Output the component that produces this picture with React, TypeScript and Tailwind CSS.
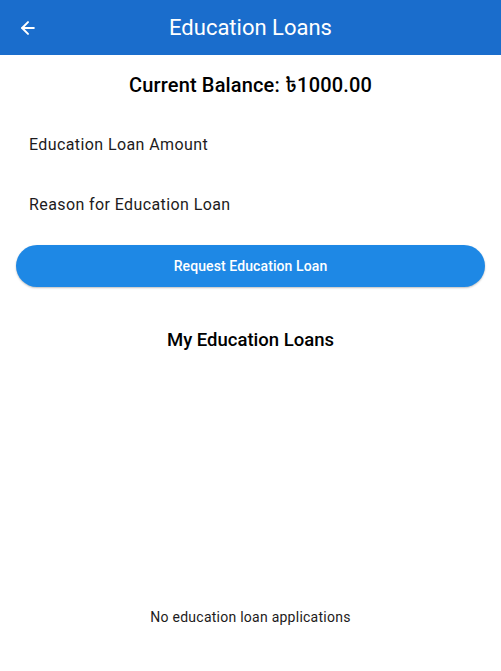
import { ArrowLeft } from "lucide-react"

export default function App() {
  return (
    <div className="flex h-[671px] w-[501px] flex-col bg-white font-['Roboto','Noto_Sans','Noto_Sans_Bengali',sans-serif]">
      <header className="flex h-[55px] shrink-0 items-center bg-[#1a6dcc] px-[18px] text-white">
        <ArrowLeft className="h-[20px] w-[20px]" strokeWidth={2.4} />
        <h1 className="flex-1 pr-[20px] text-center text-[22px] leading-none">Education Loans</h1>
      </header>

      <div className="flex flex-1 flex-col px-[16px]">
        <p className="mt-[18px] text-center text-[20px] font-medium leading-[24px] tracking-[0.15px] text-black">
          Current Balance: ৳1000.00
        </p>

        <div className="mt-[38px] pl-[13px] text-[16px] leading-[20px] tracking-[0.4px] text-[#1d1b20]">
          Education Loan Amount
        </div>
        <div className="mt-[40px] pl-[13px] text-[16px] leading-[20px] tracking-[0.4px] text-[#1d1b20]">
          Reason for Education Loan
        </div>

        <button className="mt-[30px] h-[42px] w-full rounded-full bg-[#1e88e5] text-[14px] font-medium tracking-[0.1px] text-white shadow-[0_1px_2px_rgba(0,0,0,0.25)]">
          Request Education Loan
        </button>

        <h2 className="mt-[42px] text-center text-[18.5px] font-medium leading-[22px] text-black">
          My Education Loans
        </h2>

        <div className="flex flex-1 items-end justify-center pb-[45px]">
          <p className="text-[14px] leading-[18px] tracking-[0.25px] text-[#1d1b20]">No education loan applications</p>
        </div>
      </div>
    </div>
  )
}
